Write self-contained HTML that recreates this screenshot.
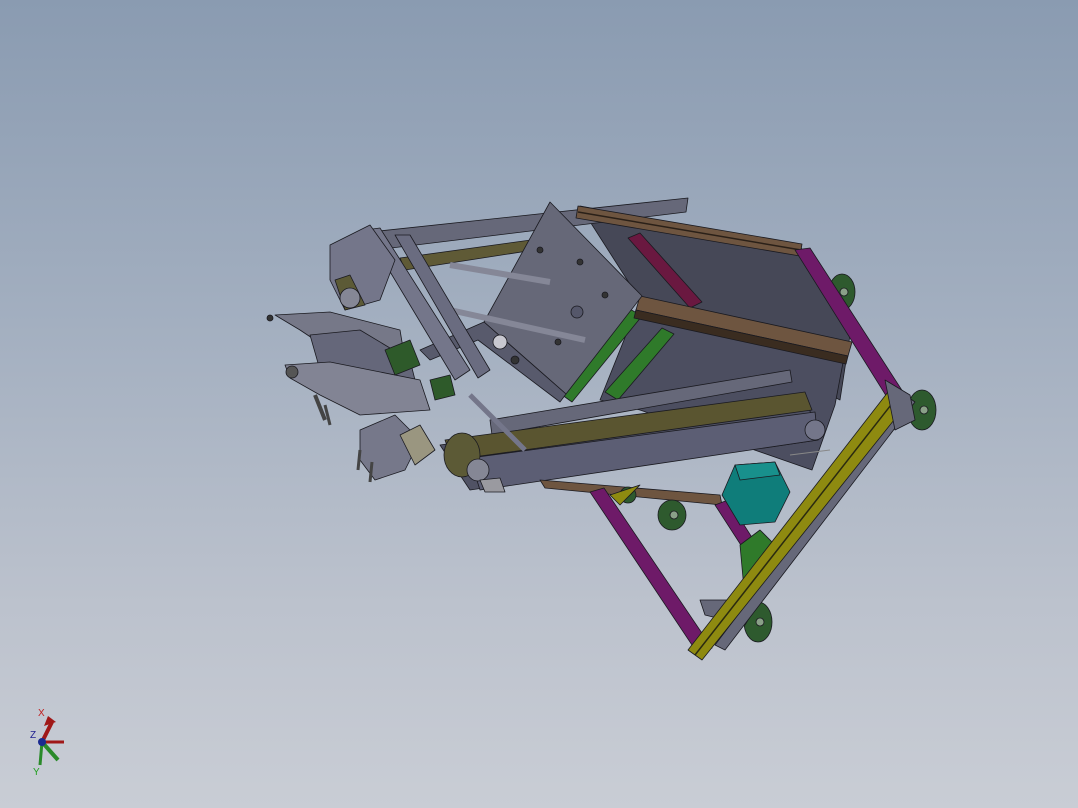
<!DOCTYPE html>
<html><head><meta charset="utf-8"><style>
html,body{margin:0;padding:0}
body{width:1078px;height:808px;overflow:hidden;background:linear-gradient(180deg,#8a9bb1 0%,#a3afc0 40%,#bcc2cd 75%,#c9cdd5 100%);position:relative;font-family:"Liberation Sans",sans-serif}
svg{position:absolute;left:0;top:0}
</style></head><body>
<svg width="1078" height="808" viewBox="0 0 1078 808">
<g stroke="#1a1a20" stroke-width="0.8" stroke-linejoin="round">
<!-- back dark box -->
<polygon points="580,206 800,246 850,335 840,400 640,300" fill="#464857"/>
<polygon points="640,300 845,352 835,405 812,470 640,410 600,400" fill="#4c4e60"/>
<!-- top rail -->
<polygon points="370,232 688,198 686,212 375,250" fill="#666879"/>
<polygon points="400,258 560,236 560,246 405,270" fill="#5f5a36"/>
<!-- brown bars -->
<polygon points="578,206 802,244 800,256 576,218" fill="#6e5540"/>
<line x1="578" y1="212" x2="801" y2="250" stroke="#2a2018" stroke-width="1.5"/>
<!-- magenta inner -->
<polygon points="628,238 640,233 702,302 690,308" fill="#6a1840"/>
<!-- green inner -->
<polygon points="558,392 628,308 642,316 572,402" fill="#2f7a2a"/>
<polygon points="605,392 662,328 674,334 618,400" fill="#2f7a2a"/>
<polygon points="640,296 852,342 848,356 636,310" fill="#6e5540"/>
<polygon points="636,310 848,356 846,364 634,318" fill="#3a2c20"/>
<!-- main plate -->
<polygon points="550,202 642,296 566,394 484,322" fill="#666878"/>
<polygon points="484,322 566,394 560,402 478,340 430,360 420,350" fill="#585a6c"/>
<circle cx="500" cy="342" r="7" fill="#c8c8d0"/><circle cx="577" cy="312" r="6" fill="#55576a"/><circle cx="558" cy="342" r="3" fill="#333"/><circle cx="515" cy="360" r="4" fill="#333"/><circle cx="605" cy="295" r="3" fill="#333"/><circle cx="540" cy="250" r="3" fill="#333"/><circle cx="580" cy="262" r="3" fill="#333"/>
<!-- shafts -->
<line x1="450" y1="265" x2="550" y2="282" stroke="#858797" stroke-width="6"/>
<line x1="450" y1="310" x2="585" y2="340" stroke="#858797" stroke-width="6"/>
<!-- left frame vertical -->
<polygon points="365,230 380,228 470,370 455,380" fill="#74768a"/>
<polygon points="395,235 410,235 490,370 478,378" fill="#6a6c80"/>
<!-- left mechanisms -->
<polygon points="330,245 370,225 395,260 380,300 345,310 330,280" fill="#74768a"/>
<polygon points="335,280 350,275 365,305 345,310" fill="#5c5a36"/>
<circle cx="350" cy="298" r="10" fill="#858795"/>
<polygon points="275,315 330,312 400,330 405,360 330,350 300,330" fill="#767888"/>
<polygon points="310,335 360,330 410,360 420,400 360,395 320,370" fill="#65677a"/>
<polygon points="285,365 330,362 420,380 430,410 360,415 320,395 290,378" fill="#828494"/>
<polygon points="385,350 410,340 420,365 395,375" fill="#2e5a2a"/>
<polygon points="430,380 450,375 455,395 435,400" fill="#2e5a2a"/>
<circle cx="292" cy="372" r="6" fill="#555"/>
<circle cx="270" cy="318" r="3" fill="#333"/>
<line x1="315" y1="395" x2="325" y2="420" stroke="#444" stroke-width="4"/>
<line x1="325" y1="405" x2="330" y2="425" stroke="#444" stroke-width="3"/>
<polygon points="360,430 395,415 420,440 405,470 375,480 360,460" fill="#76788a"/>
<line x1="360" y1="450" x2="358" y2="470" stroke="#444" stroke-width="3"/>
<line x1="372" y1="462" x2="370" y2="482" stroke="#444" stroke-width="3"/>
<polygon points="400,435 420,425 435,450 415,465" fill="#9a9680"/>
<!-- lower rail -->
<polygon points="490,420 790,370 792,382 492,435" fill="#666879"/>
<!-- conveyor -->
<polygon points="440,445 805,393 818,440 470,490" fill="#505264"/>
<polygon points="445,440 805,392 812,410 452,460" fill="#5a5530"/>
<polygon points="470,458 815,412 818,440 480,490" fill="#5c5e74"/>
<ellipse cx="462" cy="455" rx="18" ry="22" fill="#5c5a36"/>
<circle cx="478" cy="470" r="11" fill="#858795"/>
<polygon points="480,480 500,478 505,492 485,492" fill="#9a9aa0"/>
<circle cx="815" cy="430" r="10" fill="#74768a"/>
<line x1="470" y1="395" x2="525" y2="450" stroke="#74768a" stroke-width="5"/>
<!-- bottom brown bar -->
<polygon points="540,480 720,495 722,505 545,488" fill="#6e5540"/>
<!-- wheels -->
<g fill="#2e5a2e"><ellipse cx="842" cy="292" rx="13" ry="18"/><ellipse cx="922" cy="410" rx="14" ry="20"/><ellipse cx="672" cy="515" rx="14" ry="15"/><ellipse cx="758" cy="622" rx="14" ry="20"/><ellipse cx="628" cy="495" rx="8" ry="8"/></g>
<g fill="#8aa088"><circle cx="844" cy="292" r="4"/><circle cx="924" cy="410" r="4"/><circle cx="674" cy="515" r="4"/><circle cx="760" cy="622" r="4"/></g>
<!-- purple bars -->
<polygon points="795,250 810,248 905,395 890,402" fill="#6e1a68"/>
<polygon points="590,492 604,488 712,648 698,654" fill="#6e1a68"/>
<polygon points="715,505 728,500 760,550 748,556" fill="#6e1a68"/>
<!-- green lower -->
<polygon points="740,545 760,530 790,560 770,590 745,600" fill="#2f7a2a"/>
<polygon points="700,600 760,600 745,625 705,615" fill="#666879"/>
<!-- teal motor -->
<polygon points="735,465 775,462 790,492 775,522 740,525 722,495" fill="#0f7d7a"/>
<polygon points="735,465 775,462 780,475 740,480" fill="#18908c"/>
<!-- gray bar along yellow -->
<polygon points="905,395 915,402 725,650 715,645" fill="#666879"/>
<!-- yellow bar -->
<polygon points="888,392 910,400 702,660 688,650" fill="#8e8a10"/>
<line x1="898" y1="396" x2="695" y2="655" stroke="#2a2a10" stroke-width="1.5"/>
<polygon points="885,380 910,395 915,420 895,430" fill="#666879"/>
<polygon points="610,495 640,485 620,505" fill="#8e8a10"/>
<line x1="790" y1="455" x2="830" y2="450" stroke="#888" stroke-width="1"/>
</g>
<!-- axis triad -->
<g>
<line x1="42" y1="742" x2="52" y2="722" stroke="#a01818" stroke-width="4"/>
<polygon points="48,716 56,722 44,726" fill="#a01818"/>
<line x1="42" y1="742" x2="64" y2="742" stroke="#a01818" stroke-width="3"/>
<line x1="42" y1="742" x2="58" y2="760" stroke="#2a8a2a" stroke-width="4"/>
<line x1="42" y1="742" x2="40" y2="765" stroke="#2a8a2a" stroke-width="3"/>
<circle cx="42" cy="742" r="4" fill="#1a2a90"/>
<text x="38" y="716" font-size="10" fill="#c02020" font-family="Liberation Sans">X</text>
<text x="30" y="738" font-size="10" fill="#202090" font-family="Liberation Sans">Z</text>
<text x="33" y="775" font-size="10" fill="#20a020" font-family="Liberation Sans">Y</text>
</g>
</svg>
</body></html>
